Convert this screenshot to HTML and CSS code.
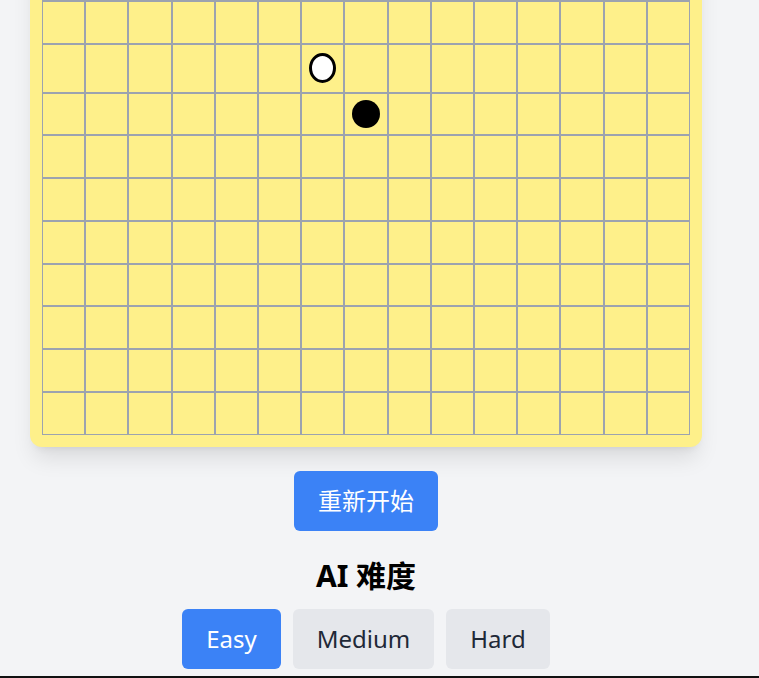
FILE: index.html
```html
<!doctype html>
<html lang="zh">
<head>
    <meta charset="UTF-8">
    <meta name="viewport" content="width=device-width, initial-scale=1.0">
    <title>五子棋</title>
    <link rel="stylesheet" href="styles.css">
</head>
<body>
    <div class="page">
        <div class="board" id="board"></div>
        <button class="restart">重新开始</button>
        <h2 class="level-title">AI 难度</h2>
        <div class="levels">
            <button class="level active">Easy</button>
            <button class="level">Medium</button>
            <button class="level">Hard</button>
        </div>
    </div>
    <div class="page-end"></div>
<script>
  const SIZE = 15;
  const stones = { '6,6': 'white', '7,7': 'black' };
  const board = document.getElementById('board');
  for (let r = 0; r < SIZE; r++) {
    const row = document.createElement('div');
    row.className = 'row';
    for (let c = 0; c < SIZE; c++) {
      const cell = document.createElement('div');
      cell.className = 'cell';
      const color = stones[r + ',' + c];
      if (color) {
        const stone = document.createElement('div');
        stone.className = 'stone ' + color;
        cell.appendChild(stone);
        if (color === 'white') row.classList.add('tall');
      }
      row.appendChild(cell);
    }
    board.appendChild(row);
  }
  window.scrollTo(0, document.documentElement.scrollHeight);
</script>
</body>
</html>
```

FILE: styles.css
```css
* {
    margin: 0;
    padding: 0;
    box-sizing: border-box;
}
body {
    font-family: 'Noto Sans', 'Noto Sans CJK SC', sans-serif;
    background-color: #f3f4f6;
    padding-top: 24px;
}
.page {
    width: 732px;
    display: flex;
    flex-direction: column;
    align-items: center;
}
.board {
    background: #fef08a;
    padding: 12px;
    border-radius: 12px;
    box-shadow: 0 15px 22px -4px rgba(0, 0, 0, 0.1), 0 6px 9px -6px rgba(0, 0, 0, 0.1);
}
.row {
    display: flex;
    height: 42.78px;
}
.row.tall {
    height: 49px;
}
.cell {
    flex: none;
    width: 43.2px;
    height: 100%;
    border: 1px solid #9ca3af;
    display: flex;
    align-items: center;
    justify-content: center;
}
.stone {
    border-radius: 50%;
}
.stone.black {
    width: 28px;
    height: 28px;
    background: #000;
}
.stone.white {
    width: 27px;
    height: 30px;
    background: #fff;
    border: 3px solid #000;
}
button {
    font-family: inherit;
    font-size: 24px;
    line-height: 36px;
    padding: 12px 24px;
    border: none;
    border-radius: 6px;
    cursor: pointer;
}
.restart {
    margin-top: 24px;
    background: #3b82f6;
    color: #fff;
}
.level-title {
    font-size: 30px;
    line-height: 42px;
    font-weight: bold;
    color: #000;
    margin: 24px 0 12px;
}
.levels {
    display: flex;
    gap: 12px;
}
.level {
    background: #e5e7eb;
    color: #1f2937;
}
.level.active {
    background: #3b82f6;
    color: #fff;
}
.page-end {
    margin-top: 7px;
    height: 2px;
    background: #111;
}
```
